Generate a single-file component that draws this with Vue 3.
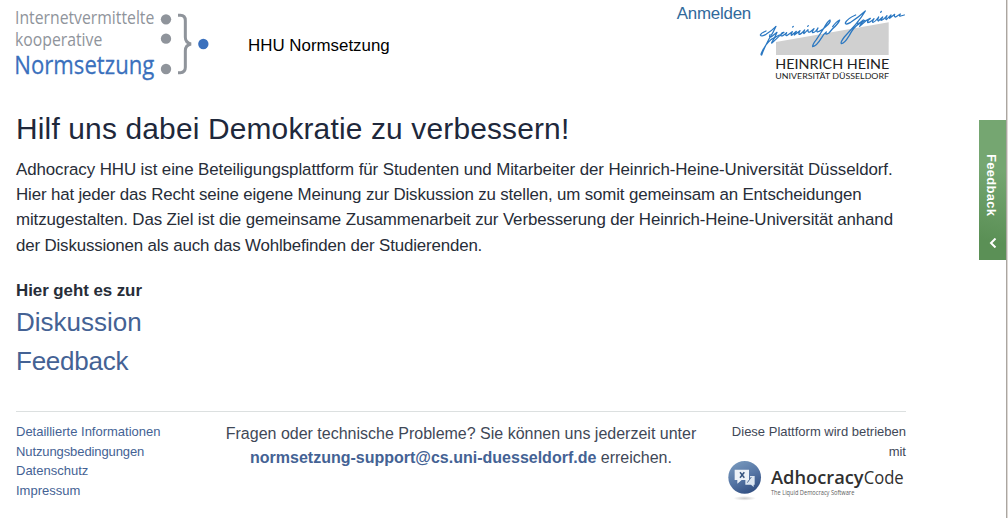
<script setup>
const intro = [
  'Adhocracy HHU ist eine Beteiligungsplattform für Studenten und Mitarbeiter der Heinrich-Heine-Universität Düsseldorf.',
  'Hier hat jeder das Recht seine eigene Meinung zur Diskussion zu stellen, um somit gemeinsam an Entscheidungen',
  'mitzugestalten. Das Ziel ist die gemeinsame Zusammenarbeit zur Verbesserung der Heinrich-Heine-Universität anhand',
  'der Diskussionen als auch das Wohlbefinden der Studierenden.'
]
const footerLinks = ['Detaillierte Informationen', 'Nutzungsbedingungen', 'Datenschutz', 'Impressum']
</script>

<template>
  <div class="page">
    <div class="content">
      <header class="header">
        <svg class="brand" viewBox="0 0 690 270" width="230" height="90">
          <g fill="#8f949b" class="brand-text">
            <text x="45" y="73" font-size="56" textLength="418" lengthAdjust="spacingAndGlyphs">Internetvermittelte</text>
            <text x="45" y="137" font-size="56" textLength="262" lengthAdjust="spacingAndGlyphs">kooperative</text>
            <circle cx="498" cy="58" r="15.5" />
            <circle cx="498" cy="116" r="15.5" />
            <circle cx="498" cy="207" r="15.5" />
          </g>
          <text class="brand-text brand-main" x="43" y="222" font-size="79" textLength="420" lengthAdjust="spacingAndGlyphs">Normsetzung</text>
          <path d="M534 46H541Q556 46 556 62V112Q556 128 573 132Q556 136 556 152V202Q556 218 541 218H534" fill="none" stroke="#8f949b" stroke-width="9" />
          <circle cx="610" cy="132" r="15.5" fill="#3a70bd" />
        </svg>
        <span class="instance">HHU Normsetzung</span>
        <a class="login">Anmelden</a>
        <svg class="university" viewBox="0 0 510 270" width="170" height="90">
          <path d="M78 126L416 67V165H78Z" fill="#d0d0d0" />
          <g fill="none" stroke="#2b78c2" stroke-width="3.8" stroke-linecap="round" stroke-linejoin="round">
            <path d="M48 93Q33 99 31 105Q34 111 48 103Q64 93 78 79Q70 98 57 117Q42 145 35 165Q31 165 36 155Q47 132 64 118L88 105" />
            <path d="M60 104Q55 114 66 109L81 97Q75 113 66 126Q63 132 68 127L90 106L102 97Q93 98 92 106Q96 112 110 98Q105 107 110 107L127 95Q121 105 125 106L139 94L133 105L150 92Q144 102 148 103Q154 102 164 90Q159 100 162 101L174 89Q173 99 180 96L192 86Q184 98 189 98Q196 97 204 84Q198 94 202 96Q212 94 226 81Q244 66 240 60Q231 66 220 87L199 119Q187 134 188 140Q199 139 215 113Q221 102 229 96Q223 107 237 99L247 87Q267 69 269 60Q259 64 248 80" />
            <path d="M317 45Q291 56 286 69Q286 76 302 67Q325 52 346 33Q335 52 317 73L283 111Q270 128 274 131Q283 131 298 106Q312 80 328 71L345 61" />
            <path d="M324 66Q318 76 328 70L340 60L329 79L348 62L361 55Q351 61 353 68Q360 68 372 56Q365 66 369 67Q375 66 386 51Q381 62 385 63L398 51L393 61Q398 62 411 47Q405 57 409 59L423 45L419 55L434 43Q431 51 437 51L451 42Q446 50 452 48L463 45" />
            <path d="M128 81L130 79M173 79L175 77M392 37L394 34" />
          </g>
          <text class="uni-name" x="76" y="207" font-size="42" textLength="342" lengthAdjust="spacingAndGlyphs">HEINRICH HEINE</text>
          <text class="uni-name" x="76" y="236" font-size="25" textLength="341" lengthAdjust="spacingAndGlyphs">UNIVERSITÄT DÜSSELDORF</text>
        </svg>
      </header>

      <main>
        <h1>Hilf uns dabei Demokratie zu verbessern!</h1>
        <p class="intro"><span v-for="line in intro" :key="line">{{ line }}</span></p>
        <p class="lead">Hier geht es zur</p>
        <nav class="targets"><a>Diskussion</a><a>Feedback</a></nav>
      </main>

      <footer>
        <nav class="links"><a v-for="link in footerLinks" :key="link">{{ link }}</a></nav>
        <p class="contact">Fragen oder technische Probleme? Sie können uns jederzeit unter<br><a>normsetzung-support@cs.uni-duesseldorf.de</a> erreichen.</p>
        <div class="operator">
          <p>Diese Plattform wird betrieben<br>mit</p>
          <svg viewBox="0 0 540 132" width="180" height="44">
            <defs>
              <linearGradient id="ball" x1="0.2" y1="0" x2="0.7" y2="1">
                <stop offset="0" stop-color="#7899bd" />
                <stop offset="0.5" stop-color="#5777a6" />
                <stop offset="1" stop-color="#304d80" />
              </linearGradient>
              <radialGradient id="shade">
                <stop offset="0" stop-color="#cccccc" />
                <stop offset="1" stop-color="#ffffff" />
              </radialGradient>
            </defs>
            <ellipse cx="56" cy="115" rx="34" ry="7" fill="url(#shade)" />
            <circle cx="56" cy="52" r="49" fill="url(#ball)" />
            <path d="M58 58H72V48H86V74H83V81L75 74H58Z" fill="#dce6f1" />
            <path d="M26 29H69V60H47L34 71V60H26Z" fill="#edf2f8" />
            <path d="M42 37L55 53M55 37L42 53" stroke="#36547f" stroke-width="4.5" />
            <path d="M64 68L76 51" stroke="#4e6c99" stroke-width="3" />
            <text class="code-name" x="135" y="71" font-size="53" font-weight="600" textLength="278" lengthAdjust="spacingAndGlyphs">Adhocracy</text>
            <text class="code-name" x="413" y="71" font-size="54" textLength="120" lengthAdjust="spacingAndGlyphs">Code</text>
            <text class="code-claim" x="135" y="104" font-size="19" textLength="250" lengthAdjust="spacingAndGlyphs">The Liquid Democracy Software</text>
          </svg>
        </div>
      </footer>
    </div>

    <aside class="feedback">
      <span>Feedback</span>
      <svg width="10" height="10" viewBox="0 0 10 10"><path d="M7.5 0.5L3 5L7.5 9.5" fill="none" stroke="#fff" stroke-width="2" /></svg>
    </aside>
    <div class="scrollbar"></div>
  </div>
</template>

<style>
body {
  margin: 0;
  background: #fff;
}
</style>

<style scoped>
.page {
  position: relative;
  height: 518px;
  overflow: hidden;
  font: 13px/19.5px "Liberation Sans", Arial, sans-serif;
  color: #3f4857;
}
.content {
  width: 920px;
}
p, h1 {
  margin: 0;
}
.header {
  display: flex;
  height: 90px;
  font-size: 16.9px;
  line-height: 26px;
}
.brand {
  flex: none;
  margin-right: 18px;
}
.brand-text {
  font-family: "Open Sans", "Noto Sans", sans-serif;
}
.brand-main {
  fill: #3a70bd;
  stroke: #3a70bd;
  stroke-width: 0.8px;
}
.instance {
  margin-top: 33px;
  color: #000;
}
.login {
  margin: 1px 0 0 auto;
  letter-spacing: -0.22px;
  color: #30699b;
}
.university {
  flex: none;
  margin-left: -1px;
}
.uni-name {
  font-family: Lato, sans-serif;
  fill: #222;
}
main {
  padding: 15.5px 0 0 16px;
  color: #272d38;
}
h1 {
  font-size: 29.9px;
  line-height: 45px;
  font-weight: 400;
  letter-spacing: 0.17px;
  color: #20283b;
}
.intro {
  margin-top: 6.1px;
  font-size: 16.9px;
  line-height: 25.35px;
}
.intro span {
  display: block;
  white-space: nowrap;
  letter-spacing: -0.083px;
}
.intro span:nth-child(2) {
  letter-spacing: -0.15px;
}
.intro span:nth-child(3) {
  letter-spacing: -0.124px;
}
.intro span:nth-child(4) {
  letter-spacing: -0.16px;
}
.lead {
  margin-top: 20.2px;
  font-size: 16.9px;
  line-height: 25.35px;
  font-weight: 700;
  letter-spacing: -0.05px;
}
.targets {
  margin-top: -0.7px;
  font-size: 26px;
  line-height: 39px;
}
.targets a, .links a {
  display: block;
}
.targets a:last-child {
  letter-spacing: -0.25px;
}
a {
  color: #446294;
}
footer {
  display: flex;
  width: 890px;
  margin: 30px 0 0 16px;
  padding-top: 10px;
  border-top: 1px solid #dce0e0;
}
.links {
  width: 200px;
  padding-top: 0.4px;
}
.links a:nth-child(2) {
  letter-spacing: -0.1px;
}
.contact {
  width: 490px;
  font-size: 16px;
  line-height: 24px;
  text-align: center;
}
.contact a {
  font-weight: 700;
}
.operator {
  width: 180px;
  margin-left: auto;
  padding-top: 0.4px;
  text-align: right;
}
.operator svg {
  display: block;
  margin-top: -1px;
}
.code-name {
  font-family: "Open Sans", sans-serif;
  fill: #303030;
}
.code-claim {
  font-family: "Open Sans", sans-serif;
  fill: #606060;
}
.feedback {
  position: absolute;
  top: 120px;
  right: 2px;
  width: 27px;
  height: 140px;
  background: linear-gradient(195deg, #75a671 35%, #5b9056 85%);
  color: #fff;
  display: flex;
  flex-direction: column;
  align-items: center;
  justify-content: space-between;
  box-sizing: border-box;
  padding: 34px 0 12px;
}
.feedback span {
  writing-mode: vertical-rl;
  font: 700 13px/15px "Liberation Sans", Arial, sans-serif;
  letter-spacing: 0.3px;
  margin-right: 2px;
}
.scrollbar {
  position: absolute;
  inset: 0 0 0 auto;
  width: 2px;
  box-sizing: border-box;
  border-left: 1px solid #aaa6a1;
  background: #ded9d5;
}
</style>
